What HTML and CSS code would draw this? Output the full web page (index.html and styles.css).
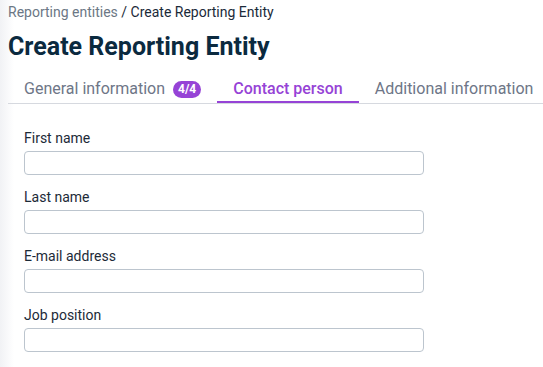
FILE: index.html
```html
<!DOCTYPE html>
<html lang="en">
  <head>
    <meta charset="UTF-8" />
    <meta
      name="viewport"
      content="width=device-width, initial-scale=1.0"
    />
    <title>Create Reporting Entity</title>
    <link rel="stylesheet" href="styles.css">
  </head>

  <body>
    <div class="page">
      <div class="breadcrumbs">
        <span class="crumb-link">Reporting entities</span>
        / Create Reporting Entity
      </div>
      <h1 class="page-title">Create Reporting Entity</h1>

      <div class="tabs">
        <div class="tab">
          General information
          <span class="badge">4/4</span>
        </div>
        <div class="tab active">Contact person</div>
        <div class="tab">Additional information</div>
      </div>

      <form class="form">
        <div class="field">
          <label for="first-name">First name</label>
          <input id="first-name" type="text" />
        </div>
        <div class="field">
          <label for="last-name">Last name</label>
          <input id="last-name" type="text" />
        </div>
        <div class="field">
          <label for="email">E-mail address</label>
          <input id="email" type="text" />
        </div>
        <div class="field">
          <label for="job">Job position</label>
          <input id="job" type="text" />
        </div>
      </form>
    </div>
  </body>
</html>
```

FILE: styles.css
```css
body {
  margin: 0;
  font-family: Roboto, "Liberation Sans", Arial, sans-serif;
  background: linear-gradient(to right, #f1f2f5 0, #ffffff 14px);
  min-height: 100vh;
  overflow: hidden;
}

.page {
  padding-left: 8px;
}

.breadcrumbs {
  padding-top: 4px;
  font-size: 14px;
  line-height: 16px;
  color: #1b2a39;
  white-space: nowrap;
}

.crumb-link {
  color: #6b7785;
}

.page-title {
  margin: 13px 0 0;
  font-size: 25px;
  line-height: 28px;
  font-weight: 700;
  color: #0b2a3f;
  white-space: nowrap;
}

.tabs {
  display: flex;
  margin-top: 12px;
  border-bottom: 1px solid #d6d9df;
  white-space: nowrap;
}

.tab {
  display: flex;
  align-items: center;
  gap: 8px;
  padding: 6px 16px 2px;
  font-size: 16px;
  line-height: 20px;
  color: #6e7687;
  border-bottom: 2px solid transparent;
}

.tab.active {
  color: #9643d6;
  font-weight: 500;
  border-bottom-color: #9643d6;
}

.badge {
  padding: 0 5px;
  border-radius: 9px;
  background-color: #9643d6;
  color: #ffffff;
  font-size: 12px;
  font-weight: 700;
  line-height: 17px;
}

.form {
  padding: 26px 0 0 16px;
}

.field {
  display: flex;
  flex-direction: column;
  margin-bottom: 14px;
}

.field label {
  margin-bottom: 5px;
  font-size: 14px;
  line-height: 16px;
  color: #1c2a38;
}

.field input {
  box-sizing: border-box;
  width: 400px;
  height: 24px;
  margin: 0;
  border: 1px solid #bcc5ce;
  border-radius: 4px;
  background: #ffffff;
}
```
